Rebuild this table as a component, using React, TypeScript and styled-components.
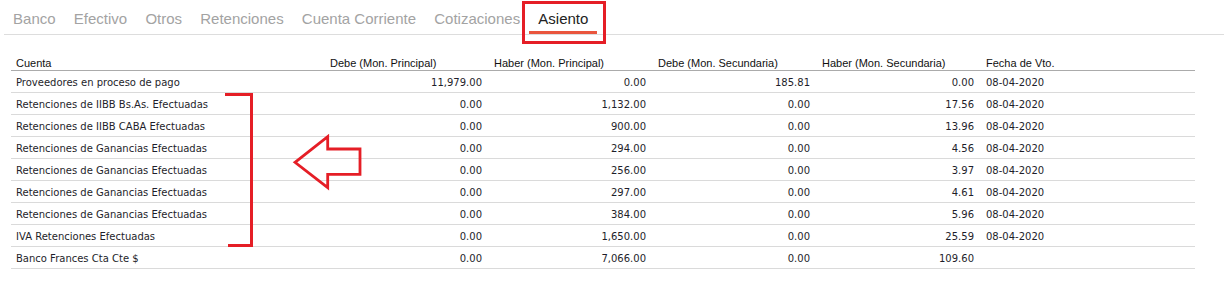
import React from "react";
import styled, { createGlobalStyle } from "styled-components";

const GlobalStyle = createGlobalStyle`
  html, body { margin: 0; padding: 0; background: #ffffff; }
  body { font-family: "Liberation Sans", Arial, sans-serif; }
  * { box-sizing: border-box; }
`;

const COLS = "314px 164px 164px 164px 164px 1fr";

const Page = styled.div`
  position: relative;
  width: 1224px;
  height: 292px;
  overflow: hidden;
`;

const TabBar = styled.nav`
  display: flex;
  margin-left: 4px;
  border-bottom: 1px solid #dddddd;
`;

const Tab = styled.div<{ $active?: boolean }>`
  padding: 9px 9.1px 2px;
  font-family: "Liberation Sans", Arial, sans-serif;
  font-size: 15px;
  line-height: 20px;
  color: ${(p) => (p.$active ? "#222222" : "#a3a3a3")};
  border-bottom: 3px solid ${(p) => (p.$active ? "#e9553d" : "transparent")};
  white-space: nowrap;
`;

const Table = styled.div`
  margin: 21px 0 0 11px;
  width: 1184px;
`;

const HeaderRow = styled.div`
  display: grid;
  grid-template-columns: ${COLS};
  border-bottom: 1px solid #ababab;
  font-family: "Liberation Sans", Arial, sans-serif;
  font-size: 11px;
  line-height: 14px;
  color: #111111;
`;

const HeaderCell = styled.div`
  padding: 0 7px 0 5px;
  white-space: nowrap;
`;

const Row = styled.div`
  display: grid;
  grid-template-columns: ${COLS};
  border-bottom: 1px solid #dadada;
  padding-top: 2px;
  font-family: "DejaVu Sans", Verdana, sans-serif;
  font-size: 10px;
  line-height: 19px;
  color: #1e1e2a;
`;

const Cell = styled.div<{ $align?: "left" | "right" }>`
  padding: 0 7px 0 5px;
  text-align: ${(p) => p.$align ?? "left"};
  white-space: nowrap;
`;

const HighlightBox = styled.div`
  position: absolute;
  left: 522px;
  top: 1px;
  width: 84px;
  height: 43px;
  border: 3px solid #e51e26;
  pointer-events: none;
`;

const Bracket = styled.svg`
  position: absolute;
  left: 224px;
  top: 92px;
  overflow: visible;
`;

const Arrow = styled.svg`
  position: absolute;
  left: 290px;
  top: 132px;
  overflow: visible;
`;

const tabs = [
  "Banco",
  "Efectivo",
  "Otros",
  "Retenciones",
  "Cuenta Corriente",
  "Cotizaciones",
  "Asiento",
];

const headers = [
  "Cuenta",
  "Debe (Mon. Principal)",
  "Haber (Mon. Principal)",
  "Debe (Mon. Secundaria)",
  "Haber (Mon. Secundaria)",
  "Fecha de Vto.",
];

type Entry = [string, string, string, string, string, string];

const rows: Entry[] = [
  ["Proveedores en proceso de pago", "11,979.00", "0.00", "185.81", "0.00", "08-04-2020"],
  ["Retenciones de IIBB Bs.As. Efectuadas", "0.00", "1,132.00", "0.00", "17.56", "08-04-2020"],
  ["Retenciones de IIBB CABA Efectuadas", "0.00", "900.00", "0.00", "13.96", "08-04-2020"],
  ["Retenciones de Ganancias Efectuadas", "0.00", "294.00", "0.00", "4.56", "08-04-2020"],
  ["Retenciones de Ganancias Efectuadas", "0.00", "256.00", "0.00", "3.97", "08-04-2020"],
  ["Retenciones de Ganancias Efectuadas", "0.00", "297.00", "0.00", "4.61", "08-04-2020"],
  ["Retenciones de Ganancias Efectuadas", "0.00", "384.00", "0.00", "5.96", "08-04-2020"],
  ["IVA Retenciones Efectuadas", "0.00", "1,650.00", "0.00", "25.59", "08-04-2020"],
  ["Banco Frances Cta Cte $", "0.00", "7,066.00", "0.00", "109.60", ""],
];

export default function App() {
  return (
    <>
      <GlobalStyle />
      <Page>
        <TabBar>
          {tabs.map((t) => (
            <Tab key={t} $active={t === "Asiento"}>
              {t}
            </Tab>
          ))}
        </TabBar>

        <Table>
          <HeaderRow>
            {headers.map((h) => (
              <HeaderCell key={h}>{h}</HeaderCell>
            ))}
          </HeaderRow>
          {rows.map((r, i) => (
            <Row key={i}>
              <Cell>{r[0]}</Cell>
              <Cell $align="right">{r[1]}</Cell>
              <Cell $align="right">{r[2]}</Cell>
              <Cell $align="right">{r[3]}</Cell>
              <Cell $align="right">{r[4]}</Cell>
              <Cell>{r[5]}</Cell>
            </Row>
          ))}
        </Table>

        <HighlightBox />

        <Bracket width="31" height="156" viewBox="0 0 31 156">
          <path
            d="M1 2.5 H27.5 V153.5 H4"
            fill="none"
            stroke="#e51e26"
            strokeWidth="3"
            strokeLinejoin="miter"
          />
        </Bracket>

        <Arrow width="75" height="60" viewBox="0 0 75 60">
          <polygon
            points="5,30.3 37.7,4.7 37.7,17 70,17 70,42.3 37.7,42.3 37.7,55.7"
            fill="none"
            stroke="#e51e26"
            strokeWidth="2.8"
            strokeLinejoin="miter"
          />
        </Arrow>
      </Page>
    </>
  );
}
